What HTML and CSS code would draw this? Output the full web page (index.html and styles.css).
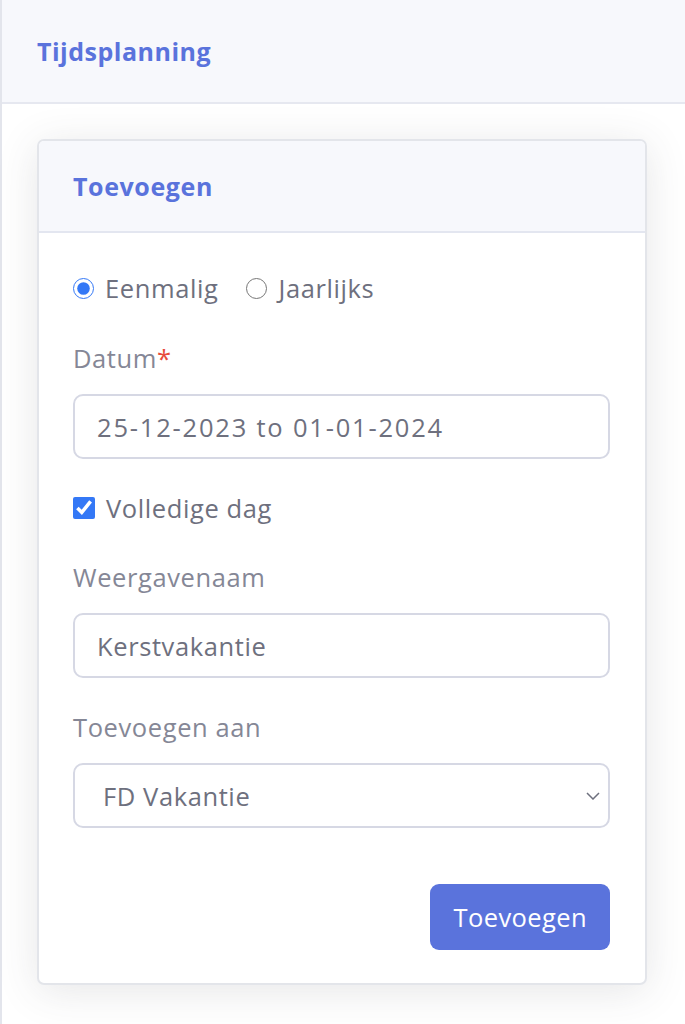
FILE: index.html
```html
<!DOCTYPE html>
<html lang="nl">
<head>
  <meta charset="UTF-8" />
  <meta name="viewport" content="width=device-width, initial-scale=1.0"/>
  <title>Tijdsplanning</title>
  <link rel="stylesheet" href="styles.css">
</head>
<body>

<div class="page">
  <header class="page-header">Tijdsplanning</header>

  <div class="content">
    <div class="card">
      <div class="card-header">Toevoegen</div>
      <form class="card-body">
        <div class="radio-row">
          <label class="check"><input type="radio" name="repeat" checked> Eenmalig</label>
          <label class="check"><input type="radio" name="repeat"> Jaarlijks</label>
        </div>

        <div class="group">
          <label class="field-label" for="datum">Datum<span class="req">*</span></label>
          <input class="field date" id="datum" type="text" value="25-12-2023 to 01-01-2024">
        </div>

        <div class="group check-group">
          <label class="check"><input type="checkbox" checked> Volledige dag</label>
        </div>

        <div class="group">
          <label class="field-label" for="naam">Weergavenaam</label>
          <input class="field" id="naam" type="text" value="Kerstvakantie">
        </div>

        <div class="group">
          <label class="field-label" for="agenda">Toevoegen aan</label>
          <div class="select-wrap">
            <select class="field select" id="agenda">
              <option>FD Vakantie</option>
            </select>
            <svg class="chevron" width="14" height="8" viewBox="0 0 14 8">
              <path d="M1 1 L7 7 L13 1" fill="none" stroke="#6e707e" stroke-width="1.5"/>
            </svg>
          </div>
        </div>

        <div class="actions">
          <button type="button" class="btn">Toevoegen</button>
        </div>
      </form>
    </div>
  </div>
</div>

</body>
</html>
```

FILE: styles.css
```css
body {
  margin: 0;
  padding: 0;
  background: #fff;
  font-family: "Open Sans", Lato, sans-serif;
  color: #858796;
}

.page {
  border-left: 2px solid #e3e5ec;
  min-height: 1024px;
  box-sizing: border-box;
}

.page-header {
  background: #f7f8fc;
  border-bottom: 2px solid #e6e8f0;
  height: 102px;
  padding: 0 35px;
  display: flex;
  align-items: center;
  font-size: 25px;
  font-weight: 700;
  color: #5a73dc;
  letter-spacing: 0.5px;
}

.content {
  padding: 35px 38px 0 35px;
}

.card {
  background: #fff;
  border: 2px solid #e3e5ea;
  border-radius: 7px;
  box-shadow: 0 6px 42px rgba(58, 59, 69, 0.13);
  overflow: hidden;
}

.card-header {
  background: #f7f8fc;
  border-bottom: 2px solid #e3e6f0;
  height: 90px;
  padding: 0 34px;
  display: flex;
  align-items: center;
  font-size: 25px;
  font-weight: 700;
  color: #5a73dc;
  letter-spacing: 0.6px;
}

.card-body {
  padding: 37px 35px 33px 34px;
  font-size: 25.5px;
  line-height: 36px;
  letter-spacing: 0.6px;
}

.radio-row {
  display: flex;
  gap: 28px;
  margin-bottom: 34px;
}

.check {
  display: flex;
  align-items: center;
  gap: 11px;
  color: #6e707e;
}

.check input {
  margin: 0;
  width: 21px;
  height: 21px;
  accent-color: #3478f6;
}

.check input[type="checkbox"] {
  width: 22px;
  height: 22px;
}

.group {
  margin-bottom: 31px;
}

.check-group {
  margin-bottom: 33px;
}

.field-label {
  display: block;
  margin-bottom: 18px;
}

.req {
  color: #e74a3b;
}

.field {
  display: block;
  width: 100%;
  height: 65px;
  box-sizing: border-box;
  border: 2px solid #d6d8e4;
  border-radius: 10px;
  padding: 0 22px;
  font-family: inherit;
  font-size: 25.5px;
  letter-spacing: 0.6px;
  color: #6e707e;
  background: #fff;
  outline: none;
}

.date {
  letter-spacing: 1.8px;
}

.select-wrap {
  position: relative;
}

.select {
  appearance: none;
  -webkit-appearance: none;
  padding-left: 28px;
}

.chevron {
  position: absolute;
  right: 10px;
  top: 29px;
  pointer-events: none;
}

.actions {
  display: flex;
  justify-content: flex-end;
  margin-top: 56px;
}

.btn {
  background: #5a73dc;
  color: #fff;
  border: none;
  border-radius: 9px;
  height: 66px;
  padding: 0 23px;
  font-family: inherit;
  font-size: 25.5px;
  letter-spacing: 0.4px;
}
```
